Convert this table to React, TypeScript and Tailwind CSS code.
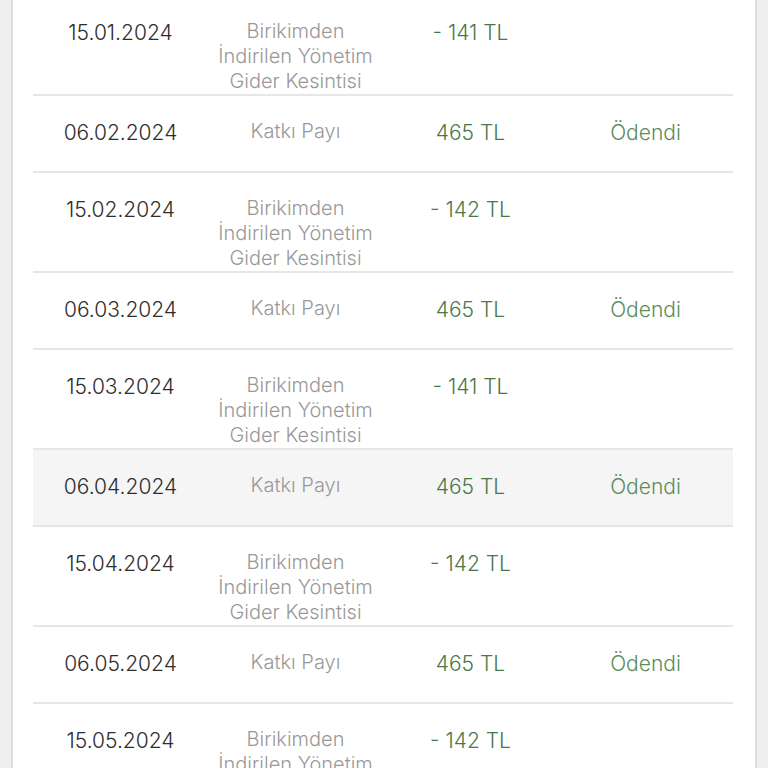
import React from "react";

type Row = { date: string; kind: "fee" | "pay"; amount: string; highlight?: boolean };

const rows: Row[] = [
  { date: "15.01.2024", kind: "fee", amount: "- 141 TL" },
  { date: "06.02.2024", kind: "pay", amount: "465 TL" },
  { date: "15.02.2024", kind: "fee", amount: "- 142 TL" },
  { date: "06.03.2024", kind: "pay", amount: "465 TL" },
  { date: "15.03.2024", kind: "fee", amount: "- 141 TL" },
  { date: "06.04.2024", kind: "pay", amount: "465 TL", highlight: true },
  { date: "15.04.2024", kind: "fee", amount: "- 142 TL" },
  { date: "06.05.2024", kind: "pay", amount: "465 TL" },
  { date: "15.05.2024", kind: "fee", amount: "- 142 TL" },
];

export default function App() {
  return (
    <div
      className="h-[768px] w-[768px] overflow-hidden bg-[#efefef] px-[11px]"
      style={{ fontFamily: "Inter, 'Open Sans', sans-serif" }}
    >
      <div className="h-[768px] overflow-hidden border-x-2 border-[#dedede] bg-white pl-[20px] pr-[22px]">
        <div className="-mt-[4px]">
          {rows.map((r, i) => (
            <div
              key={i}
              className={`grid grid-cols-4 overflow-hidden border-b-2 border-[#e6e6e6] pt-[23px] text-center text-[21px] font-light leading-[25px] ${
                r.kind === "pay" ? "h-[77px]" : "h-[100px]"
              } ${r.highlight ? "bg-[#f5f5f5]" : ""}`}
            >
              <div className="pt-[1px] text-[#2e2e2e]">{r.date}</div>
              <div className="text-[20px] text-[#999999]">
                {r.kind === "fee" ? (
                  <>
                    Birikimden
                    <br />
                    İndirilen Yönetim
                    <br />
                    Gider Kesintisi
                  </>
                ) : (
                  "Katkı Payı"
                )}
              </div>
              <div className="pt-[1px] text-[#4a784a]">{r.amount}</div>
              <div className="pt-[1px] text-[#5b8c5b]">{r.kind === "pay" ? "Ödendi" : ""}</div>
            </div>
          ))}
        </div>
      </div>
    </div>
  );
}
